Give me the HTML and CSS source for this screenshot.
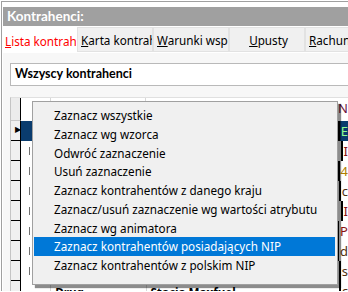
FILE: index.html
```html
<!DOCTYPE html>
<html lang="pl">
<head>
  <meta charset="UTF-8" />
  <title>Kontrahenci</title>
  <link rel="stylesheet" href="styles.css">
</head>
<body>
  <div class="window">
    <div class="title">Kontrahenci:</div>

    <div class="tabs">
      <div class="tab active"><u>L</u>ista kontrahenci</div>
      <div class="tab"><u>K</u>arta kontrahenta</div>
      <div class="tab"><u>W</u>arunki współpracy</div>
      <div class="tab center"><u>U</u>pusty</div>
      <div class="tab"><u>R</u>achunki</div>
    </div>

    <div class="panel">
      <div class="filter">Wszyscy kontrahenci</div>

      <div class="grid">
        <div class="row head">
          <div class="ind"></div>
          <div class="c1"></div>
          <div class="c2"></div>
          <div class="c3"></div>
          <div class="c4"><span class="n">N</span></div>
        </div>
        <div class="row sel">
          <div class="ind">&#9654;</div>
          <div class="c1"></div>
          <div class="c2"></div>
          <div class="c3"></div>
          <div class="c4"><span class="green">E</span></div>
        </div>
        <div class="row"><div class="ind"></div><div class="c1"><i></i></div><div class="c2"></div><div class="c3"></div><div class="c4"><span class="red">I</span></div></div>
        <div class="row"><div class="ind"></div><div class="c1"><i></i></div><div class="c2"></div><div class="c3"></div><div class="c4"><span class="gold">4</span></div></div>
        <div class="row"><div class="ind"></div><div class="c1"><i></i></div><div class="c2"></div><div class="c3"></div><div class="c4"><span class="dark">c</span></div></div>
        <div class="row"><div class="ind"></div><div class="c1"><i></i></div><div class="c2"></div><div class="c3"></div><div class="c4"><span class="red">I</span></div></div>
        <div class="row"><div class="ind"></div><div class="c1"><i></i></div><div class="c2"></div><div class="c3"></div><div class="c4"><span class="red">P</span></div></div>
        <div class="row"><div class="ind"></div><div class="c1"><i></i></div><div class="c2"></div><div class="c3"></div><div class="c4"><span class="dark">d</span></div></div>
        <div class="row"><div class="ind"></div><div class="c1"><i></i></div><div class="c2"></div><div class="c3"></div><div class="c4"><span class="dark">s</span></div></div>
        <div class="row last"><div class="ind"></div><div class="c1"></div><div class="c2">Drug</div><div class="c3">Stacja Maxfuel</div><div class="c4"><span class="dark">c</span></div></div>
      </div>
    </div>
  </div>

  <!-- popup menu over the grid -->
  <div class="menu">
    <div class="item">Zaznacz wszystkie</div>
    <div class="item">Zaznacz wg wzorca</div>
    <div class="item">Odwróć zaznaczenie</div>
    <div class="item">Usuń zaznaczenie</div>
    <div class="item">Zaznacz kontrahentów z danego kraju</div>
    <div class="item">Zaznacz/usuń zaznaczenie wg wartości atrybutu</div>
    <div class="item">Zaznacz wg animatora</div>
    <div class="item hover">Zaznacz kontrahentów posiadających NIP</div>
    <div class="item">Zaznacz kontrahentów z polskim NIP</div>
  </div>
</body>
</html>
```

FILE: styles.css
```css
html, body {
  overflow: hidden;
  height: 292px;
}
body {
  margin: 0;
  background: #ffffff;
  font-family: "Noto Sans", sans-serif;
  font-size: 11.7px;
  color: #000;
}
.window {
  margin: 1px 0 0 1px;
  border-left: 1px solid #a0a0a0;
  border-top: 1px solid #a0a0a0;
  padding: 5px 0 0 1px;
  height: 284px;
  overflow: hidden;
}
.title {
  height: 19px;
  line-height: 19px;
  background: #a0a0a0;
  color: #fff;
  font-family: Lato, "Noto Sans", sans-serif;
  font-weight: bold;
  font-size: 13.5px;
  padding-left: 4px;
  white-space: nowrap;
}
.tabs {
  display: flex;
  height: 26px;
  margin-top: 1px;
  white-space: nowrap;
  overflow: hidden;
}
.tab {
  width: 76px;
  height: 25px;
  line-height: 24px;
  padding-left: 3px;
  box-sizing: border-box;
  overflow: hidden;
  background: #f0f0f0;
  border: 1px solid #e2e2e2;
  flex-shrink: 0;
}
.tab.active {
  width: 74px;
  background: #fff;
  border-color: #fff;
  color: #ff0000;
  padding-left: 1px;
  margin-top: 1px;
}
.tab.center {
  text-align: center;
}
.panel {
  background: #f7f7f7;
  padding: 10px 0 0 7px;
  height: 240px;
}
.filter {
  height: 21px;
  line-height: 20px;
  background: #fff;
  border: 1px solid #b9b9b9;
  border-right: none;
  font-family: Lato, "Noto Sans", sans-serif;
  font-weight: bold;
  font-size: 12.5px;
  padding-left: 4px;
}
.grid {
  margin-top: 11px;
  border-left: 1px solid #c4c4c4;
  border-top: 1px solid #e0e0e0;
  background: #fff;
}
.row {
  display: flex;
  height: 20px;
}
.row.head {
  height: 23px;
}
.ind {
  width: 9px;
  border-right: 1px solid #000;
  border-bottom: 1px solid #000;
  background: #f0f0f0;
  font-size: 8px;
  line-height: 16px;
  text-indent: 4px;
  overflow: hidden;
  flex-shrink: 0;
}
.head .ind {
  border-bottom-color: #c8c8c8;
  background: #ececec;
}
.c1 {
  width: 30px;
  border-right: 1px solid #d8d8d8;
  position: relative;
}
.c1 i {
  position: absolute;
  left: 8px;
  top: 6px;
  width: 1px;
  height: 8px;
  background: #707070;
}
.c2 {
  width: 94px;
  border-right: 1px solid #d8d8d8;
  padding-left: 4px;
  font-weight: bold;
  line-height: 20px;
}
.c3 {
  width: 194px;
  padding-left: 3px;
  font-weight: bold;
  line-height: 20px;
  white-space: nowrap;
}
.c4 {
  flex: 1;
  border-left: 2px solid #000;
  padding-left: 1px;
  line-height: 20px;
  font-size: 13px;
}
.last .c2,
.last .c3 {
  line-height: 23px;
}
.head .c4 {
  border-left-color: #fff;
}
.sel .c1,
.sel .c4 {
  background: #0a3c6e;
}
.n { color: #6b1040; }
.green { color: #90ff90; }
.red { color: #8a1010; }
.gold { color: #b08000; }
.dark { color: #503010; }

.menu {
  position: absolute;
  left: 32px;
  top: 101px;
  width: 306px;
  height: 184px;
  padding-top: 4px;
  box-sizing: border-box;
  background: #f0f0f0;
  border: 1px solid #a0a0a0;
  box-shadow: 3px 3px 1px rgba(0, 0, 0, 0.45);
}
.item {
  height: 18.75px;
  line-height: 18px;
  margin: 0 2px 0 1px;
  padding-left: 20px;
  white-space: nowrap;
}
.item.hover {
  background: #0078d7;
  color: #fff;
}
```
